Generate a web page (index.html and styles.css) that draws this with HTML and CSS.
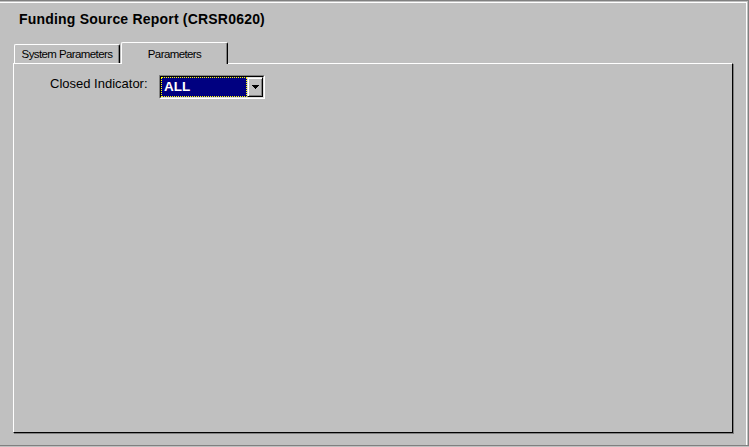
FILE: index.html
```html
<!DOCTYPE html>
<html>
<head>
<meta charset="utf-8">
<title>Funding Source Report</title>
<link rel="stylesheet" href="styles.css">
</head>
<body>
<div class="frame">
  <div class="pane">
    <h1 class="title">Funding Source Report (CRSR0620)</h1>
    <div class="tabs">
      <div class="tab">System Parameters</div>
      <div class="tab active">Parameters</div>
    </div>
    <div class="panel">
      <div class="row">
        <label class="label">Closed Indicator:</label>
        <div class="combo">
          <div class="combo-in">
            <span class="field">ALL</span>
            <span class="btn"><svg width="7" height="4" viewBox="0 0 7 4"><path d="M0 0h7v1H0zM1 1h5v1H1zM2 2h3v1H2zM3 3h1v1H3z" fill="#000"/></svg></span>
          </div>
        </div>
      </div>
    </div>
  </div>
</div>
</body>
</html>
```
FILE: styles.css
```css
html, body {
  margin: 0;
  background: #c0c0c0;
}
body {
  width: 749px;
  height: 447px;
  overflow: hidden;
  font-family: "Liberation Sans", Arial, sans-serif;
  color: #000;
}
.frame {
  box-sizing: border-box;
  height: 446px;
  border-top: 1px solid #808080;
  border-right: 1px solid #808080;
  border-bottom: 1px solid #808080;
  padding-top: 1px;
  display: flex;
}
.pane {
  flex: 1;
  margin-right: 1px;
  border-top: 1px solid #fff;
  border-right: 1px solid #fff;
  padding-left: 13px;
}
.title {
  margin: 0;
  padding: 8px 0 0 6px;
  font-size: 14px;
  font-weight: bold;
  line-height: 16px;
  letter-spacing: 0.2px;
}
.tabs {
  display: flex;
  align-items: flex-end;
  height: 21px;
  margin-top: 15px;
  position: relative;
  z-index: 1;
}
.tab {
  box-sizing: border-box;
  width: 106px;
  height: 19px;
  margin-left: 1px;
  border: 1px solid #fff;
  border-bottom: 0;
  border-right-color: #000;
  border-top-left-radius: 2px;
  border-top-right-radius: 2px;
  box-shadow: inset -1px 0 #808080;
  background: #c0c0c0;
  font-size: 11.5px;
  letter-spacing: -0.6px;
  line-height: 13px;
  padding-top: 3px;
  text-align: center;
}
.tab.active {
  width: 107px;
  height: 22px;
  padding-top: 5px;
  margin-bottom: -1px;
}
.panel {
  box-sizing: border-box;
  width: 720px;
  height: 370px;
  border-top: 1px solid #fff;
  border-left: 1px solid #fff;
  border-right: 1px solid #000;
  border-bottom: 1px solid #000;
  box-shadow: 1px 1px 0 #808080;
  padding: 11px 0 0 36px;
}
.row {
  display: flex;
  align-items: flex-start;
}
.label {
  width: 109px;
  font-size: 13px;
  line-height: 15px;
  margin-top: 1px;
}
.combo {
  box-sizing: border-box;
  width: 106px;
  height: 24px;
  border: 1px solid;
  border-color: #808080 #fff #fff #808080;
}
.combo-in {
  box-sizing: border-box;
  height: 100%;
  border: 1px solid;
  border-color: #000 #dfdfdf #dfdfdf #000;
  display: flex;
}
.field {
  flex: 1;
  box-sizing: border-box;
  background: #000080;
  color: #fff;
  border: 1px dotted #ffff00;
  font-size: 13.5px;
  font-weight: bold;
  line-height: 18px;
  padding-left: 2px;
}
.btn {
  box-sizing: border-box;
  width: 16px;
  border: 1px solid;
  border-color: #dfdfdf #000 #000 #dfdfdf;
  box-shadow: inset 1px 1px #fff, inset -1px -1px #808080;
  background: #c0c0c0;
  display: flex;
  align-items: center;
  justify-content: center;
}
.btn svg {
  display: block;
}
```
